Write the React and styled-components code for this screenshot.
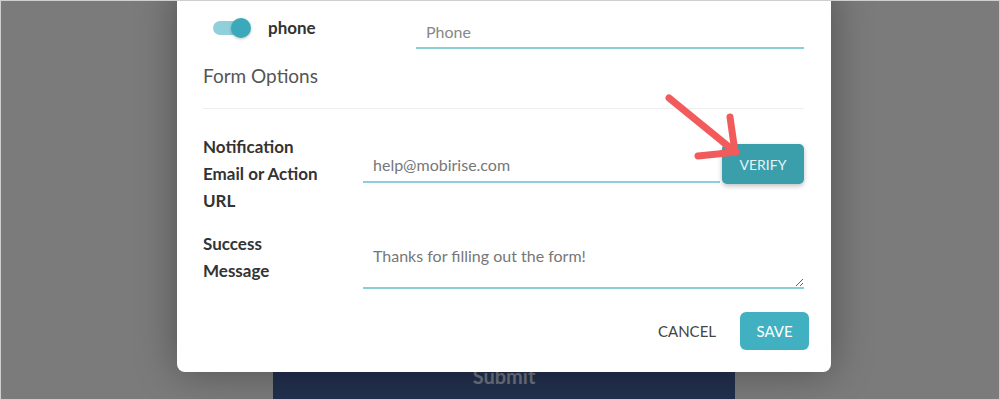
import styled, { createGlobalStyle } from "styled-components";

const GlobalStyle = createGlobalStyle`
  html, body {
    margin: 0;
    padding: 0;
  }
  body {
    font-family: "Lato", "Noto Sans", sans-serif;
  }
`;

const Stage = styled.div`
  position: relative;
  width: 1000px;
  height: 400px;
  box-sizing: border-box;
  border: 1px solid #cfcfcf;
  background: #7b7b7b;
  overflow: hidden;
  display: flex;
  flex-direction: column;
  justify-content: flex-end;
  align-items: center;
  padding-left: 8px;
`;

const SubmitBar = styled.div`
  width: 462px;
  height: 56px;
  background: #22304e;
  color: #6d727e;
  font-weight: 700;
  font-size: 20px;
  display: flex;
  justify-content: center;
  padding-top: 21px;
  box-sizing: border-box;
`;

const Dialog = styled.div`
  position: absolute;
  left: 176px;
  top: -16px;
  width: 654px;
  box-sizing: border-box;
  padding: 16px 22px 22px 26px;
  background: #fff;
  border-radius: 8px;
  box-shadow: 0 0 40px rgba(0, 0, 0, 0.35);
  color: #333;
`;

const ToggleRow = styled.div`
  display: flex;
  align-items: flex-start;
  height: 50px;
  padding-right: 5px;
`;

const Toggle = styled.div`
  position: relative;
  margin: 20px 0 0 10px;
  width: 37px;
  height: 14px;
  border-radius: 7px;
  background: #8fd0da;
  flex: none;
`;

const Knob = styled.span`
  position: absolute;
  right: -1px;
  top: -3px;
  width: 20px;
  height: 20px;
  border-radius: 50%;
  background: #3aaabb;
  box-shadow: 0 1px 3px rgba(0, 0, 0, 0.25);
`;

const FieldName = styled.span`
  margin: 16px 0 0 18px;
  width: 148px;
  font-weight: 700;
  font-size: 17px;
  color: #333;
`;

const Input = styled.input`
  flex: 1;
  min-width: 0;
  height: ${(p) => p.$h || 34}px;
  margin-top: ${(p) => p.$top || 0}px;
  box-sizing: border-box;
  border: none;
  border-bottom: 2px solid #8ad0d8;
  padding: 0 10px;
  font-family: inherit;
  font-size: 16px;
  color: #777;
  outline: none;
  &::placeholder {
    color: #888;
  }
`;

const SectionTitle = styled.div`
  margin-top: 13px;
  font-size: 19px;
  line-height: 24px;
  color: #555;
`;

const Divider = styled.hr`
  margin: 20px 5px 0 0;
  border: none;
  border-top: 1px solid #eeeeee;
`;

const FormRow = styled.div`
  display: grid;
  grid-template-columns: 160px 1fr;
  margin-top: ${(p) => p.$top}px;
  padding-right: 5px;
`;

const Label = styled.div`
  font-weight: 700;
  font-size: 17px;
  line-height: 27px;
  color: #333;
  width: 126px;
`;

const InputGroup = styled.div`
  display: flex;
  align-items: flex-end;
  gap: 2px;
  padding-top: 10px;
  height: 40px;
`;

const VerifyButton = styled.button`
  width: 82px;
  height: 40px;
  flex: none;
  border: none;
  border-radius: 5px;
  background: #3a9eab;
  color: #e6f3f5;
  font-family: inherit;
  font-size: 14px;
  box-shadow: 0 2px 5px rgba(0, 0, 0, 0.25);
  margin-bottom: -1px;
`;

const TextArea = styled.textarea`
  display: block;
  margin-top: 5px;
  height: 54px;
  width: 100%;
  box-sizing: border-box;
  border: none;
  border-bottom: 2px solid #8ad0d8;
  padding: 9px 10px 0;
  font-family: inherit;
  font-size: 16px;
  line-height: 24px;
  color: #777;
  resize: vertical;
  outline: none;
`;

const Footer = styled.div`
  display: flex;
  justify-content: flex-end;
  align-items: center;
  gap: 24px;
  margin-top: 23px;
`;

const TextButton = styled.button`
  border: none;
  background: none;
  font-family: inherit;
  font-size: 15px;
  color: #444;
  padding: 0;
`;

const SaveButton = styled.button`
  width: 69px;
  height: 38px;
  border: none;
  border-radius: 6px;
  background: #41b1c1;
  color: #fff;
  font-family: inherit;
  font-size: 15px;
`;

const Arrow = styled.svg`
  position: absolute;
  left: 660px;
  top: 90px;
  overflow: visible;
`;

export default function App() {
  return (
    <>
      <GlobalStyle />
      <Stage>
        <SubmitBar>Submit</SubmitBar>
        <Dialog>
          <ToggleRow>
            <Toggle>
              <Knob />
            </Toggle>
            <FieldName>phone</FieldName>
            <Input $top={14} placeholder="Phone" />
          </ToggleRow>
          <SectionTitle>Form Options</SectionTitle>
          <Divider />
          <FormRow $top={24}>
            <Label>Notification Email or Action URL</Label>
            <InputGroup>
              <Input $h={36} defaultValue="help@mobirise.com" />
              <VerifyButton>VERIFY</VerifyButton>
            </InputGroup>
          </FormRow>
          <FormRow $top={16}>
            <Label>Success Message</Label>
            <TextArea defaultValue="Thanks for filling out the form!" />
          </FormRow>
          <Footer>
            <TextButton>CANCEL</TextButton>
            <SaveButton>SAVE</SaveButton>
          </Footer>
        </Dialog>
        <Arrow width="90" height="75">
          <g stroke="#f25b5b" strokeWidth="7" strokeLinecap="round" fill="none">
            <line x1="8" y1="7" x2="73" y2="60" />
            <line x1="69" y1="26" x2="74" y2="61" />
            <line x1="37" y1="65" x2="75" y2="61" />
          </g>
        </Arrow>
      </Stage>
    </>
  );
}
